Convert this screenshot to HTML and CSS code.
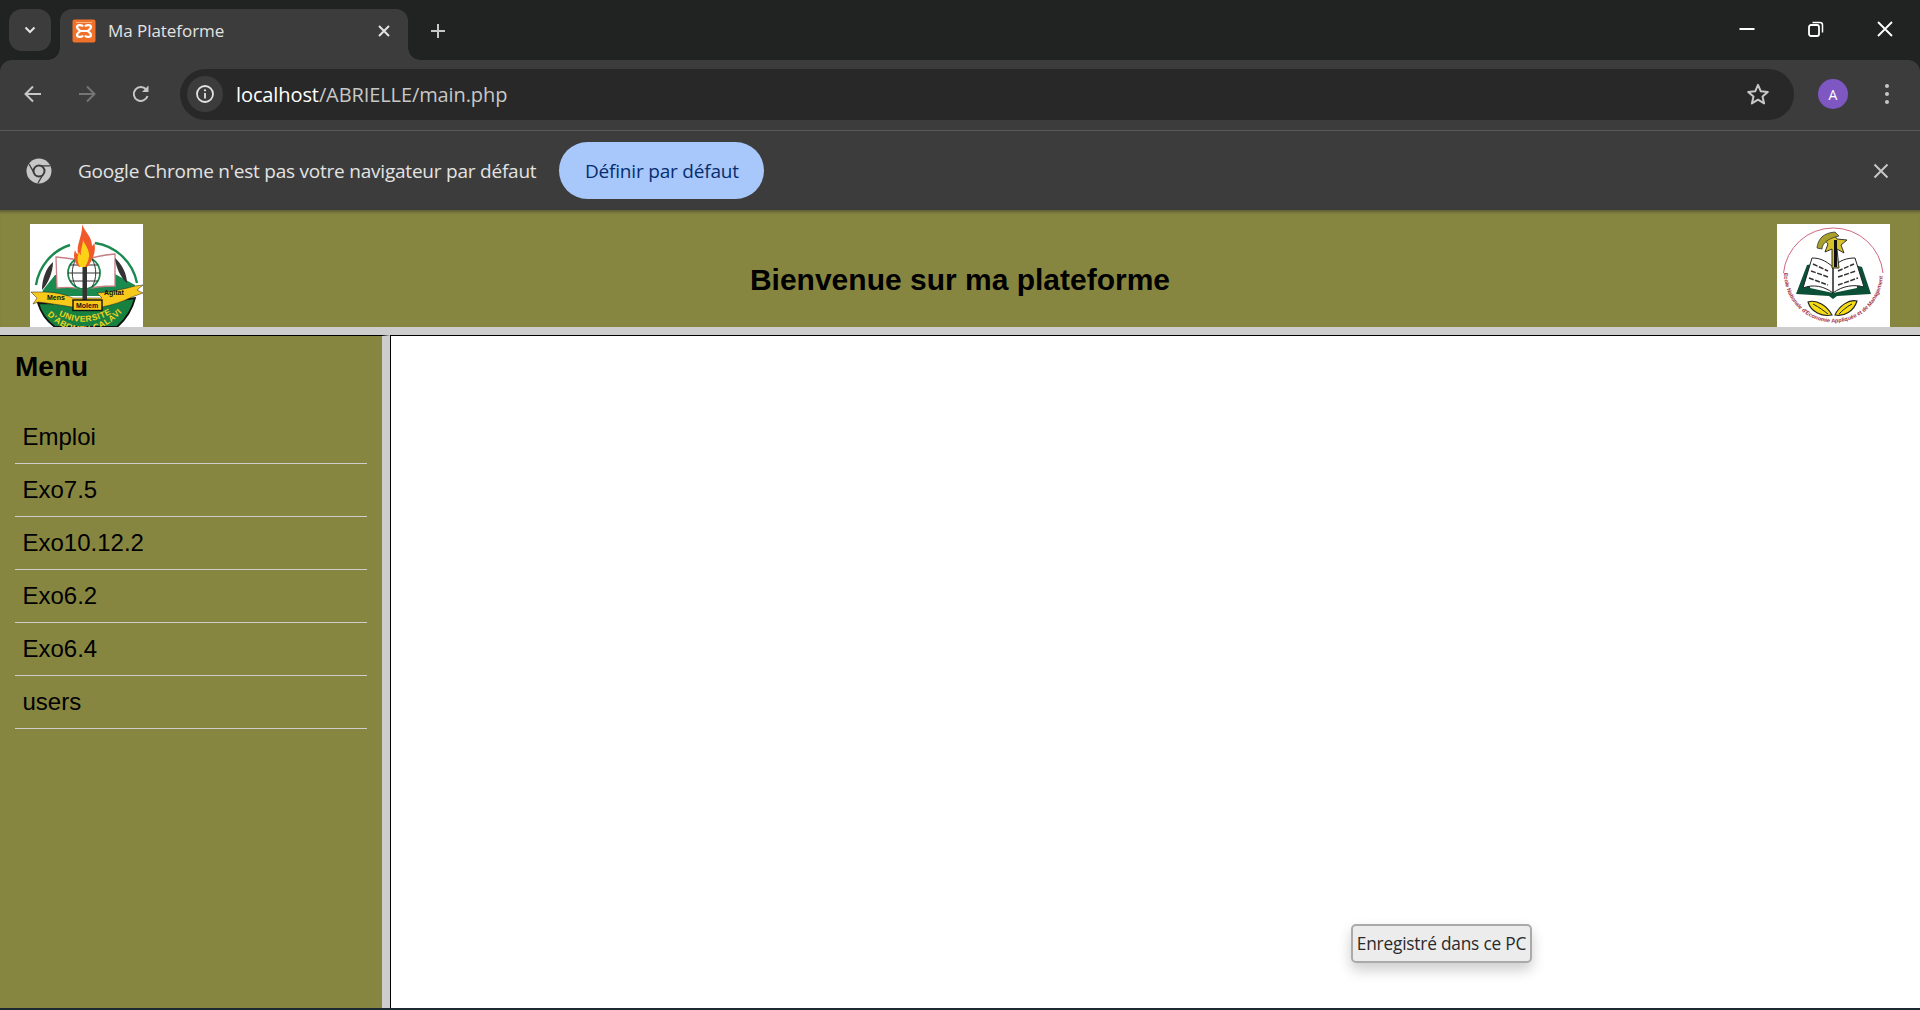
FILE: index.html
```html
<!DOCTYPE html>
<html lang="fr">
<head>
    <title>Ma Plateforme</title>
    <meta charset="utf-8">
    <link rel="stylesheet" href="styles.css">
</head>
<body>
<div class="browser">
    <!-- tab strip -->
    <div class="tabstrip">
        <div class="tab-search">
            <svg width="14" height="10" viewBox="0 0 14 10"><path d="M2.500 2.500 7 7l4.500-4.500" fill="none" stroke="#e3e3e3" stroke-width="2"/></svg>
        </div>
        <div class="tab">
            <svg class="favicon" width="24" height="24" viewBox="0 0 24 24">
                <rect x="0.500" y="0.500" width="23" height="23" rx="2" fill="#f0712a"/>
                <path d="M4 3.500h16" stroke="#fbb58c" stroke-width="1"/>
                <path d="M11 7.500C10 5.500 5 5.500 5 8c0 2 2 2.500 3.500 4C7 13.500 5 14 5 16c0 2.500 5 2.500 6 .5M13 7.500c1-2 6-2 6 .5 0 2-2 2.500-3.500 4 1.500 1.500 3.500 2 3.500 4 0 2.500-5 2.500-6 .5" fill="none" stroke="#fff" stroke-width="2.200"/>
                <path d="M9 12h6" stroke="#fff" stroke-width="2"/>
            </svg>
            <span class="tab-title">Ma Plateforme</span>
            <svg class="tab-close" width="12" height="12" viewBox="0 0 12 12"><path d="M1 1l10 10M11 1 1 11" stroke="#e3e3e3" stroke-width="2"/></svg>
        </div>
        <svg class="new-tab" width="16" height="16" viewBox="0 0 16 16"><path d="M8 1v14M1 8h14" stroke="#c7c7c7" stroke-width="2"/></svg>
        <div class="window-controls">
            <svg width="16" height="16" viewBox="0 0 16 16"><path d="M0.500 8h15" stroke="#fff" stroke-width="2"/></svg>
            <svg width="16" height="16" viewBox="0 0 16 16"><rect x="1" y="4" width="10" height="11" rx="2" fill="none" stroke="#fff" stroke-width="1.800"/><path d="M4.500 1.500h7.500a2.500 2.500 0 0 1 2.500 2.500v7.500" fill="none" stroke="#fff" stroke-width="1.500"/></svg>
            <svg width="16" height="16" viewBox="0 0 16 16"><path d="M1 1l14 14M15 1 1 15" stroke="#fff" stroke-width="1.800"/></svg>
        </div>
    </div>

    <!-- toolbar -->
    <div class="toolbar">
        <svg class="nav-icon" width="20" height="20" viewBox="0 0 20 20"><path d="M18 10H3M10 2.500 2.500 10l7.500 7.500" fill="none" stroke="#c7c7c7" stroke-width="2"/></svg>
        <svg class="nav-icon" width="20" height="20" viewBox="0 0 20 20"><path d="M2 10h15M10 2.500l7.500 7.500-7.500 7.500" fill="none" stroke="#757575" stroke-width="2"/></svg>
        <svg class="nav-icon" width="20" height="20" viewBox="0 0 20 20"><path d="M16.500 12a7 7 0 1 1-1.300-6.500" fill="none" stroke="#c7c7c7" stroke-width="2"/><path d="M17.500 1.500v6.500h-6.500z" fill="#c7c7c7"/></svg>
        <div class="omnibox">
            <div class="site-info">
                <svg width="20" height="20" viewBox="0 0 20 20"><circle cx="10" cy="10" r="8" fill="none" stroke="#e3e3e3" stroke-width="1.800"/><path d="M10 9v5.500" stroke="#e3e3e3" stroke-width="1.800"/><circle cx="10" cy="6.300" r="1.100" fill="#e3e3e3"/></svg>
            </div>
            <span class="url"><span class="url-host">localhost</span>/ABRIELLE/main.php</span>
            <svg class="star" width="24" height="24" viewBox="0 0 24 24"><path d="M12 2.800l2.800 6.500 7 .6-5.300 4.600 1.600 6.900-6.100-3.700-6.100 3.700 1.600-6.900-5.300-4.600 7-.6z" fill="none" stroke="#c7c7c7" stroke-width="2" stroke-linejoin="round"/></svg>
        </div>
        <div class="avatar">A</div>
        <div class="dots"><i></i><i></i><i></i></div>
    </div>

    <!-- infobar -->
    <div class="infobar">
        <svg class="chrome-icon" width="26" height="26" viewBox="0 0 26 26">
            <circle cx="13" cy="13" r="12.500" fill="#c7c7c7"/>
            <path d="M13 7.800h11M8.500 15.600 3 6M17.500 15.600 12 25" stroke="#3c3c3c" stroke-width="1.300"/>
            <circle cx="13" cy="13" r="6.500" fill="#3c3c3c"/>
            <circle cx="13" cy="13" r="4.500" fill="#c7c7c7"/>
        </svg>
        <span class="infobar-text">Google Chrome n'est pas votre navigateur par défaut</span>
        <div class="default-btn">Définir par défaut</div>
        <svg class="infobar-close" width="16" height="16" viewBox="0 0 16 16"><path d="M1.500 1.500l13 13M14.500 1.500l-13 13" stroke="#c7c7c7" stroke-width="2"/></svg>
    </div>
</div>

<!-- page -->
<div class="page">
    <header class="site-header">
        <svg class="logo" viewBox="0 0 113 103">
            <rect width="113" height="103" fill="#fff"/>
            <path d="M6 61A50 50 0 0 1 40 21M65 19A50 50 0 0 1 107 59" fill="none" stroke="#1a8a4e" stroke-width="2.400"/>
            <path d="M13 66 25 51 85 50 105 61 104 72H12z" fill="#1a8a4e"/>
            <path d="M26 33C36 34 46 35 52 37 60 34 72 31 85 30V62C72 62 62 63 54 66 46 63 36 63 27 64z" fill="#fff" stroke="#c77f84" stroke-width="1.300"/>
            <circle cx="54" cy="49" r="16" fill="#fff" stroke="#1a8a4e" stroke-width="1.800"/>
            <path d="M38 49h32M40 41h28M40 57h28M54 33v32M46 35c-5 9-5 19 0 28M62 35c5 9 5 19 0 28" fill="none" stroke="#333" stroke-width="1"/>
            <path d="M23 38C16 44 12 55 12 66 18 60 23 48 23 38zM85 34C92 40 97 50 97 59 91 54 86 44 85 34z" fill="#333"/>
            <path d="M8 79C12 92 18 98 25 103H87C96 95 102 86 105 74L60 80z" fill="#17813f" stroke="#111" stroke-width="1.800"/>
            <path d="M52 0C54 7 62 12 62 22 64 21 64 19 64 18 67 27 62 38 57 43H49C44 38 43 32 45 26 46 29 47 30 48 30 46 20 53 12 52 0z" fill="#f1592a"/>
            <path d="M53 16C55 21 60 26 59 33 58 38 56 41 55 43H50C47 38 47 33 49 28 50 30 50 31 51 31 50 26 53 21 53 16z" fill="#fcd116"/>
            <path d="M1 68 14 68C24 68 34 70 43 74H72L67 69C80 68 95 65 105 62L113 61 107 66 113 69 102 73C92 78 82 81 72 83H42C30 81 18 79 8 78L3 80 7 74z" fill="#f7c91b" stroke="#222" stroke-width="0.500"/>
            <rect x="52.500" y="43" width="4.500" height="33" fill="#333"/>
            <rect x="43" y="76" width="29" height="10.500" fill="#f7c91b" stroke="#111" stroke-width="1.400"/>
            <text class="logo-motto" x="17" y="75.500">Mens</text>
            <text class="logo-motto" x="74" y="71">Agitat</text>
            <text class="logo-motto" x="46" y="84">Molem</text>
            <path id="arc-top" d="M26 90Q57 108 90 84" fill="none"/>
            <path id="arc-bottom" d="M14 88Q56 132 100 80" fill="none"/>
            <text class="logo-arc"><textPath href="#arc-top" startOffset="4%">UNIVERSITE</textPath></text>
            <text class="logo-arc"><textPath href="#arc-bottom" startOffset="4%">D'ABOMEY-CALAVI</textPath></text>
        </svg>
        <h1 class="site-title">Bienvenue sur ma plateforme</h1>
        <svg class="logo" viewBox="0 0 113 103">
            <rect width="113" height="103" fill="#fff"/>
            <path d="M6.500 49A50 50 0 0 1 106 49" fill="none" stroke="#d0667e" stroke-width="1"/>
            <path d="M19 70 30 41 36 40 33 64 56 69 80 64 78 41 85 43 94 70 60 72 56 75 52 72z" fill="#0b4f36"/>
            <path d="M26 64C36 60 47 62 56 69V43C48 36 42 34 35 34zM87 63C77 60 65 62 56 69V43C63 36 70 34 78 34z" fill="#fff" stroke="#222" stroke-width="1"/>
            <path d="M36 40l15 7M34 47l17 6M32 54l19 7M61 47l16-7M61 53l18-6M61 61l20-7" stroke="#333" stroke-width="1.500" stroke-dasharray="5 1.500"/>
            <path d="M46 14 52 15 56 9 60 15 70 16 64 21 67 29 60 25 62 44 55 44 55 25 48 28 51 20z" fill="#d8c22a" stroke="#222" stroke-width="0.900"/>
            <path d="M58 8C46 9 41 15 40 24L45 25C45 19 52 14 62 12z" fill="#a8a02a" stroke="#333" stroke-width="0.800"/>
            <path d="M58.500 16V43" stroke="#111" stroke-width="3"/>
            <path d="M31 78C40 75 50 82 55 91 45 93 34 88 31 78zM80 77C72 75 62 82 58 91 67 93 77 87 80 77z" fill="#f6dc14" stroke="#222" stroke-width="1.100"/>
            <path d="M36 80C42 83 47 87 51 90M75 80C69 83 65 87 62 90" stroke="#222" stroke-width="1" fill="none"/>
            <path id="seal-arc" d="M7 49A49.500 49.500 0 0 0 106 49" fill="none"/>
            <text class="seal-text"><textPath href="#seal-arc" textLength="152">Ecole Nationale d'Economie Appliquée et de Management</textPath></text>
        </svg>
    </header>

    <div class="page-body">
        <aside class="sidebar">
            <h2 class="menu-title">Menu</h2>
            <ul class="menu">
                <li>Emploi</li>
                <li>Exo7.5</li>
                <li>Exo10.12.2</li>
                <li>Exo6.2</li>
                <li>Exo6.4</li>
                <li>users</li>
            </ul>
        </aside>
        <main class="content"></main>
    </div>
    <div class="taskbar-edge"></div>
    <div class="saved-tip">Enregistré dans ce PC</div>
</div>
</body>
</html>
```

FILE: styles.css
```css
* {
    box-sizing: border-box;
}

html,
body {
    margin: 0;
    height: 1010px;
    overflow: hidden;
}

body {
    display: flex;
    flex-direction: column;
    background: #fff;
    font-family: "Liberation Sans", Arial, sans-serif;
}

/* browser chrome */
.browser {
    flex: none;
    background: #202322;
    font-family: "Open Sans", "Noto Sans", sans-serif;
}

.tabstrip {
    display: flex;
    align-items: flex-end;
    height: 60px;
    padding-left: 9px;
}

.tab-search {
    display: flex;
    align-items: center;
    justify-content: center;
    width: 42px;
    height: 42px;
    margin-bottom: 9px;
    background: #3c3c3c;
    border-radius: 13px;
}

.tab {
    position: relative;
    flex: none;
    display: flex;
    align-items: center;
    width: 348px;
    height: 51px;
    margin-left: 9px;
    padding: 0 0 8px 12px;
    background: #3c3c3c;
    border-radius: 12px 12px 0 0;
}

.tab::before,
.tab::after {
    content: "";
    position: absolute;
    bottom: 0;
    width: 12px;
    height: 12px;
}

.tab::before {
    left: -12px;
    background: radial-gradient(circle at 0 0, #202322 11.500px, #3c3c3c 12px);
}

.tab::after {
    right: -12px;
    background: radial-gradient(circle at 100% 0, #202322 11.500px, #3c3c3c 12px);
}

.tab-title {
    margin-left: 12px;
    color: #e3e3e3;
    font-size: 17px;
    letter-spacing: -0.050px;
}

.tab-close {
    margin-left: auto;
    margin-right: 18px;
}

.new-tab {
    margin-left: 22px;
    margin-bottom: 21px;
}

.window-controls {
    display: flex;
    gap: 53px;
    margin-left: auto;
    margin-right: 27px;
    margin-bottom: 23px;
}

.toolbar {
    display: flex;
    align-items: center;
    height: 71px;
    padding: 0 0 2px 23px;
    background: #3c3c3c;
    border-bottom: 1px solid #5a5a5a;
    border-radius: 12px 12px 0 0;
}

.nav-icon {
    flex: none;
    margin-right: 34px;
}

.nav-icon:nth-child(3) {
    margin-right: 29px;
}

.omnibox {
    flex: none;
    display: flex;
    align-items: center;
    width: 1614px;
    height: 51px;
    padding: 0 24px 0 7px;
    background: #282828;
    border-radius: 26px;
}

.site-info {
    display: flex;
    align-items: center;
    justify-content: center;
    width: 36px;
    height: 36px;
    background: #3c3c3c;
    border-radius: 50%;
}

.url {
    margin-left: 13px;
    color: #c7c7c7;
    font-size: 20px;
    letter-spacing: -0.100px;
}

.url-host {
    color: #fff;
}

.star {
    margin-left: auto;
}

.avatar {
    flex: none;
    display: flex;
    align-items: center;
    justify-content: center;
    width: 30px;
    height: 30px;
    margin-left: 24px;
    background: #7e57c2;
    border-radius: 50%;
    color: #fff;
    font-size: 14px;
}

.dots {
    display: flex;
    flex-direction: column;
    gap: 4px;
    margin-left: 37px;
}

.dots i {
    width: 4px;
    height: 4px;
    background: #c7c7c7;
    border-radius: 50%;
}

.infobar {
    display: flex;
    align-items: center;
    height: 79px;
    padding-left: 26px;
    background: #3c3c3c;
}

.infobar-text {
    margin-left: 26px;
    color: #e3e3e3;
    font-size: 19px;
    letter-spacing: -0.220px;
}

.default-btn {
    display: flex;
    align-items: center;
    justify-content: center;
    width: 205px;
    height: 57px;
    margin-left: 23px;
    background: #a8c7fa;
    border-radius: 29px;
    color: #062e6f;
    font-size: 19px;
    font-weight: 500;
    letter-spacing: -0.200px;
}

.infobar-close {
    margin-left: auto;
    margin-right: 31px;
}

/* page itself */
.page {
    position: relative;
    flex: 1;
    display: flex;
    flex-direction: column;
    min-height: 0;
}

.site-header {
    display: flex;
    align-items: flex-end;
    justify-content: space-between;
    height: 117px;
    padding: 0 30px;
    background: #878641;
    box-shadow: inset 0 4px 3px -2px #5f5e33;
}

.logo {
    display: block;
    width: 113px;
    height: 103px;
}

.logo-motto {
    font-size: 7px;
    font-weight: bold;
    fill: #111;
}

.logo-arc {
    font-size: 8.500px;
    font-weight: bold;
    letter-spacing: 0.500px;
    fill: #f2d21f;
}

.seal-text {
    font-size: 5.600px;
    font-weight: bold;
    fill: #a3323f;
}

.site-title {
    align-self: center;
    margin: 22px 0 0;
    font-size: 30px;
    color: #000;
}

.page-body {
    flex: 1;
    display: flex;
    min-height: 0;
    border-top: 8px solid #cdcdcd;
}

.sidebar {
    width: 390px;
    padding: 0 15px;
    background: #878641;
    border-top: 1px solid #000;
    border-right: 8px solid #cdcdcd;
}

.menu-title {
    margin: 15px 0 0;
    font-size: 28px;
    line-height: 32px;
    color: #000;
}

.menu {
    margin: 28px 0 0;
    padding: 0;
    list-style: none;
}

.menu li {
    height: 53px;
    padding-left: 7.500px;
    border-bottom: 1px solid #cdcdcd;
    font-size: 24px;
    line-height: 52px;
    color: #000;
}

.content {
    flex: 1;
    background: #fff;
    border-top: 1px solid #000;
    border-left: 1px solid #000;
}

.taskbar-edge {
    flex: none;
    height: 2px;
    background: #1d2a32;
}

.saved-tip {
    position: absolute;
    left: 1351px;
    top: 714px;
    height: 39px;
    width: 181px;
    background: #ececec;
    border: 2px solid #aaa;
    border-radius: 5px;
    box-shadow: 0 7px 14px rgba(0, 0, 0, 0.2);
    color: #2a2a2a;
    font-family: "Open Sans", sans-serif;
    font-size: 17.300px;
    line-height: 36px;
    text-align: center;
    white-space: nowrap;
    letter-spacing: -0.200px;
}
```
